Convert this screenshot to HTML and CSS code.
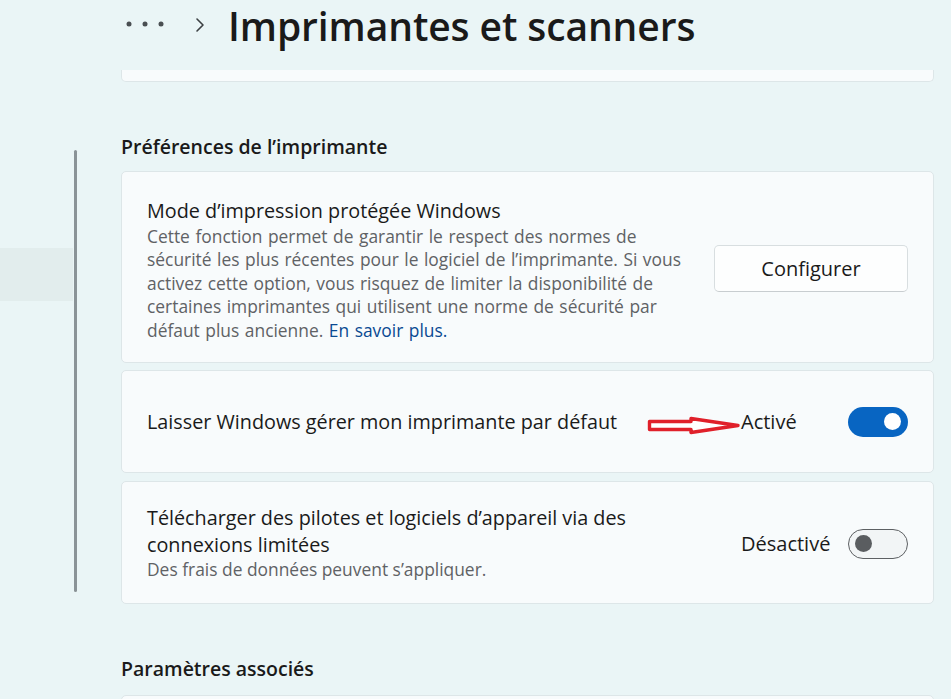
FILE: index.html
```html
<!DOCTYPE html>
<html lang="fr">
<head>
<meta charset="utf-8">
<title>Imprimantes et scanners</title>
<link rel="stylesheet" href="styles.css">
</head>
<body>
<div class="page">
  <aside class="sidebar">
    <div class="nav">
      <div class="nav-item selected"></div>
    </div>
    <div class="scroll-thumb"></div>
  </aside>
  <main class="main">
    <header class="header">
      <svg class="dots" width="38" height="8" viewBox="0 0 38 8"><circle cx="3" cy="4" r="2.5" fill="#4a4f52"/><circle cx="19" cy="4" r="2.5" fill="#4a4f52"/><circle cx="35" cy="4" r="2.5" fill="#4a4f52"/></svg>
      <svg class="chev" width="10" height="16" viewBox="0 0 10 16"><polyline points="2,2 8,8 2,14" fill="none" stroke="#3c4043" stroke-width="1.6" stroke-linecap="round" stroke-linejoin="round"/></svg>
      <h1 class="title">Imprimantes et scanners</h1>
    </header>
    <div class="card-fragment"></div>

    <h2 class="section-title">Préférences de l’imprimante</h2>

    <section class="card card-tall">
      <div class="card-text">
        <div class="card-title">Mode d’impression protégée Windows</div>
        <div class="card-desc">Cette fonction permet de garantir le respect des normes de<br>sécurité les plus récentes pour le logiciel de l’imprimante. Si vous<br>activez cette option, vous risquez de limiter la disponibilité de<br>certaines imprimantes qui utilisent une norme de sécurité par<br>défaut plus ancienne. <a class="link" href="#">En savoir plus.</a></div>
      </div>
      <button class="btn">Configurer</button>
    </section>

    <section class="card card-mid">
      <div class="card-text">
        <div class="card-title">Laisser Windows gérer mon imprimante par défaut</div>
      </div>
      <div class="control">
        <span class="state">Activé</span>
        <span class="toggle on"><span class="knob"></span></span>
      </div>
      <svg class="annot-arrow" width="96" height="22" viewBox="0 0 96 22"><path d="M3.5 7.5 H45 V4.5 L92 11.5 L45 18.5 V15.5 H3.5 Z" fill="#ffffff" stroke="#e0202a" stroke-width="3.4" stroke-linejoin="round"/></svg>
    </section>

    <section class="card card-low">
      <div class="card-text">
        <div class="card-title">Télécharger des pilotes et logiciels d’appareil via des<br>connexions limitées</div>
        <div class="card-desc">Des frais de données peuvent s’appliquer.</div>
      </div>
      <div class="control">
        <span class="state">Désactivé</span>
        <span class="toggle off"><span class="knob"></span></span>
      </div>
    </section>

    <h2 class="section-title second">Paramètres associés</h2>
    <div class="card card-next"></div>
  </main>
</div>
</body>
</html>
```

FILE: styles.css
```css
html, body {
  margin: 0;
  padding: 0;
  height: 100%;
  overflow: hidden;
}
body {
  background: #eaf5f6;
  font-family: "Open Sans", "Noto Sans", sans-serif;
  color: #1b1b1b;
}
.page {
  display: flex;
  height: 699px;
  overflow: hidden;
}
.sidebar {
  display: flex;
  width: 121px;
  flex-shrink: 0;
}
.nav {
  width: 73px;
  padding-top: 248px;
}
.nav-item.selected {
  height: 53px;
  background: #e2eded;
}
.scroll-thumb {
  width: 3px;
  height: 442px;
  margin-top: 150px;
  margin-left: 1px;
  border-radius: 2px;
  background: #8a9397;
}
.main {
  width: 813px;
  flex-shrink: 0;
  display: flex;
  flex-direction: column;
}
.main > * {
  flex-shrink: 0;
}
.header {
  display: flex;
  align-items: center;
  height: 52px;
}
.dots {
  margin-left: 5px;
  margin-top: -4px;
}
.chev {
  margin-left: 31px;
  margin-top: -2px;
}
.title {
  margin: 0 0 0 23px;
  font-size: 39px;
  line-height: 46px;
  font-weight: 600;
  color: #1a1a1a;
  letter-spacing: -0.1px;
}
.card-fragment {
  margin-top: 18px;
  height: 11px;
  background: #f8fbfc;
  border: 1px solid #dde6e8;
  border-top: none;
  border-radius: 0 0 5px 5px;
}
.section-title {
  margin: 53px 0 12px 0;
  font-size: 19.5px;
  line-height: 24px;
  font-weight: 600;
  color: #1a1a1a;
}
.section-title.second {
  margin-top: 53px;
  margin-bottom: 14px;
}
.card {
  position: relative;
  display: flex;
  align-items: center;
  justify-content: space-between;
  background: #f8fbfc;
  border: 1px solid #dde6e8;
  border-radius: 5px;
  padding: 0 25px 0 25px;
}
.card + .card {
  margin-top: 7px;
}
.card-tall {
  height: 190px;
  box-sizing: border-box;
  height: 192px;
  padding-top: 7px;
}
.card-mid { height: 101px; }
.card-low { height: 121px; margin-top: 8px !important; }
.card-next { height: 20px; }
.card-title {
  font-size: 19.8px;
  line-height: 27px;
  color: #1a1a1a;
}
.card-tall .card-title {
  line-height: 24px;
  margin-bottom: 2px;
}
.card-desc {
  font-size: 17.4px;
  line-height: 23.5px;
  color: #5f6265;
}
.card-tall .card-desc {
  word-spacing: 1px;
}
.link {
  color: #0a4a92;
  text-decoration: none;
}
.btn {
  width: 194px;
  height: 47px;
  margin-top: -5px;
  background: #fdfefe;
  border: 1px solid #d8dee0;
  border-bottom-color: #c8cdd0;
  border-radius: 5px;
  font-family: "Open Sans", "Noto Sans", sans-serif;
  font-size: 20px;
  color: #1a1a1a;
}
.control {
  display: flex;
  align-items: center;
}
.state {
  width: 107px;
  font-size: 20px;
  color: #1a1a1a;
}
.toggle {
  display: flex;
  align-items: center;
  box-sizing: border-box;
  width: 60px;
  height: 30px;
  border-radius: 15px;
  padding: 0 7px;
}
.toggle.on {
  background: #0865c2;
  justify-content: flex-end;
}
.toggle.off {
  background: #f2f5f6;
  border: 1.5px solid #5d6063;
  justify-content: flex-start;
  padding: 0 6px;
}
.knob {
  width: 17px;
  height: 17px;
  border-radius: 50%;
}
.toggle.on .knob { background: #ffffff; }
.toggle.off .knob { background: #5a5d60; }
.card-low .control { margin-top: 2px; }
.annot-arrow {
  position: absolute;
  left: 524px;
  top: 43px;
}
```
